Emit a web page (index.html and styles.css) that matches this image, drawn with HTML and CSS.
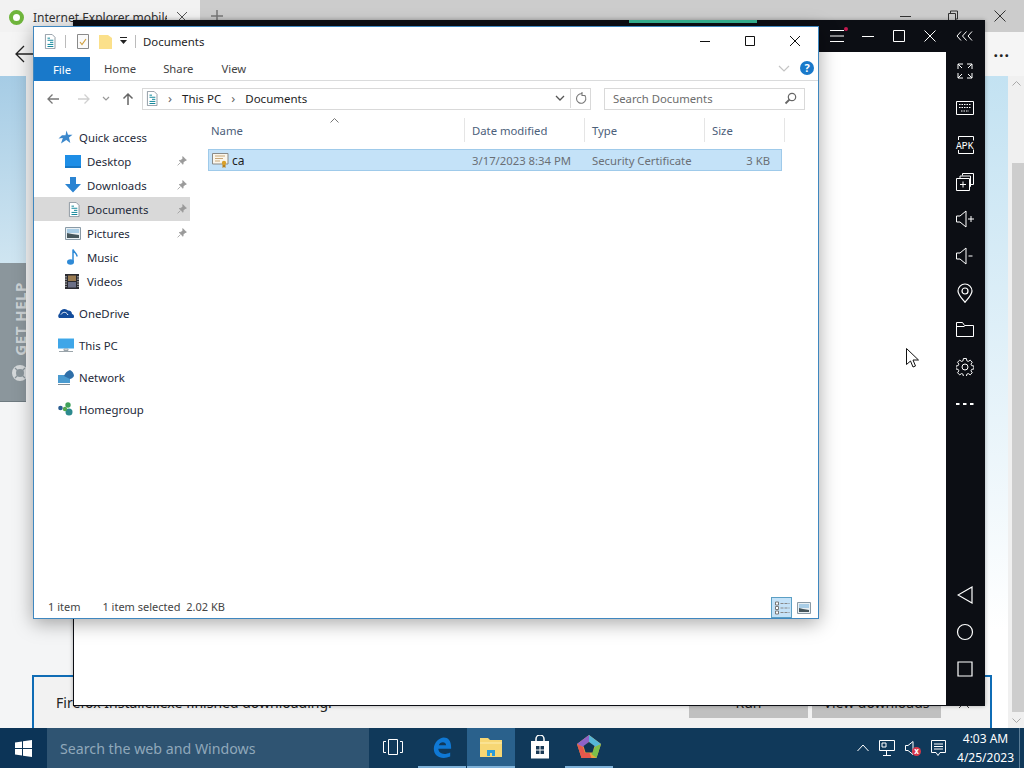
FILE: index.html
```html
<!DOCTYPE html>
<html lang="en">
<head>
    <meta charset="UTF-8">
    <title>Documents</title>
    <link rel="stylesheet" href="styles.css">
</head>
<body>
    <svg class="defs" width="0" height="0">
        <symbol id="i-doc" viewBox="0 0 14 18">
            <path d="M1.5 .5h8l3.5 3.5v13.500h-11.500z" fill="#fff" stroke="#7f8c96"/>
            <path d="M4 5h3M4 7.500h7M7 10h4M4 12.500h7M4 15h7" stroke="#15899c" stroke-width="1.200"/>
        </symbol>
        <symbol id="i-pin" viewBox="0 0 10 10">
            <path d="M5.800 .6l3.600 3.600-1.500.5-1.700 1.700-.2 1.900-3.800-3.800 1.900-.2 1.700-1.700zM3.300 6.700l-2.700 2.700" fill="#9a9a9a" stroke="#9a9a9a" stroke-width=".8"/>
        </symbol>
    </svg>

    <div class="desktop">
        <!-- navegador atras de tudo -->
        <div class="browser">
            <div class="tabstrip">
                <div class="tab">
                    <span class="favicon"></span>
                    <span class="tab-title">Internet Explorer mobile</span>
                    <svg class="tab-x" width="12" height="12" viewBox="0 0 12 12"><path d="M1 1l10 10M11 1L1 11" stroke="#555" fill="none"/></svg>
                </div>
                <svg class="tab-plus" width="14" height="14" viewBox="0 0 14 14"><path d="M7 1v12M1 7h12" stroke="#777" stroke-width="1.500" fill="none"/></svg>
                <div class="browser-controls">
                    <svg width="12" height="12" viewBox="0 0 12 12"><path d="M0 6.500h11" stroke="#333" fill="none"/></svg>
                    <svg width="12" height="12" viewBox="0 0 12 12"><path d="M1.500 3.500h7v8h-7zM3.500 3.500v-2.500h7v8h-2" stroke="#333" fill="none"/></svg>
                    <svg width="12" height="12" viewBox="0 0 12 12"><path d="M.5 .5l11 11M11.500 .5l-11 11" stroke="#333" fill="none"/></svg>
                </div>
            </div>
            <div class="browser-toolbar">
                <svg class="back" width="22" height="18" viewBox="0 0 22 18"><path d="M21 9H2M10 1L2 9l8 8" stroke="#222" stroke-width="1.300" fill="none"/></svg>
                <span class="more">...</span>
            </div>
            <div class="browser-page">
                <div class="page-left">
                    <div class="page-blue"></div>
                    <div class="gethelp">
                        <span class="gethelp-text">GET HELP</span>
                        <svg width="18" height="18" viewBox="0 0 18 18"><circle cx="9" cy="9" r="6" fill="none" stroke="#d5d9db" stroke-width="4"/><path d="M4 4l3 3M14 4l-3 3M4 14l3-3M14 14l-3-3" stroke="#8b969c" stroke-width="1.200"/></svg>
                    </div>
                </div>
                <div class="page-right"></div>
                <div class="scrollbar">
                    <svg width="9" height="5" viewBox="0 0 9 5"><path d="M.5 4.500l4-4 4 4" stroke="#a8a8a8" fill="none"/></svg>
                    <span class="thumb"></span>
                    <svg width="9" height="5" viewBox="0 0 9 5"><path d="M.5 .5l4 4 4-4" stroke="#a8a8a8" fill="none"/></svg>
                </div>
            </div>
        </div>

        <div class="download-bar">
            <span class="download-text">Firefox Installer.exe finished downloading.</span>
            <span class="dl-btn dl-run">Run</span>
            <span class="dl-btn dl-view">View downloads</span>
            <svg class="dl-x" width="12" height="12" viewBox="0 0 12 12"><path d="M1 1l10 10M11 1L1 11" stroke="#444" fill="none"/></svg>
        </div>

        <!-- emulador -->
        <div class="emulator">
            <div class="emu-top">
                <span class="emu-progress"></span>
                <div class="emu-controls">
                    <span class="emu-menu">
                        <svg width="14" height="14" viewBox="0 0 14 14"><path d="M0 1.500h14M0 7h14M0 12.500h14" stroke="#fff" fill="none"/></svg>
                        <i class="emu-dot"></i>
                    </span>
                    <svg width="14" height="14" viewBox="0 0 14 14"><path d="M1 7.500h12" stroke="#fff" fill="none"/></svg>
                    <svg width="14" height="14" viewBox="0 0 14 14"><path d="M1.500 1.500h11v11h-11z" stroke="#fff" fill="none"/></svg>
                    <svg width="14" height="14" viewBox="0 0 14 14"><path d="M1.500 1.500l11 11M12.500 1.500l-11 11" stroke="#fff" fill="none"/></svg>
                    <svg class="emu-collapse" width="18" height="10" viewBox="0 0 18 10"><path d="M5 .5L1 5l4 4.500M10.500 .5L6.500 5l4 4.500M16 .5L12 5l4 4.500" stroke="#fff" fill="none"/></svg>
                </div>
            </div>
            <div class="emu-body">
                <div class="emu-screen"></div>
                <div class="emu-side">
                    <span class="side-btn"><svg width="18" height="18" viewBox="0 0 18 18"><path d="M2 7V2h5M2 2l4 4M11 2h5v5M16 2l-4 4M2 11v5h5M2 16l4-4M16 11v5h-5M16 16l-4-4" stroke="#fff" fill="none"/></svg></span>
                    <span class="side-btn"><svg width="18" height="14" viewBox="0 0 18 14"><path d="M.5 .5h17v13H.5z" stroke="#fff" fill="none"/><path d="M3 3.500h12M3 6.500h12M5 10h8" stroke="#fff" stroke-dasharray="1.500 1" fill="none"/></svg></span>
                    <span class="side-btn"><svg class="apk-icon" width="18" height="18" viewBox="0 0 18 18"><path d="M2.500 4V.5h15v17h-15V14" stroke="#fff" fill="none"/><rect x="0" y="4.500" width="18" height="9" fill="#0c0e14"/><text class="apk" x="0" y="13" textLength="17.500" lengthAdjust="spacingAndGlyphs">APK</text></svg></span>
                    <span class="side-btn"><svg width="18" height="18" viewBox="0 0 18 18"><path d="M.5 5.500h13v12H.5zM4 5.500v-2.500h10.500v10.500h-1M6.500 2.500V.5h11v11h-3" stroke="#fff" fill="none"/><path d="M7 8.500v6M4 11.500h6" stroke="#fff" fill="none"/></svg></span>
                    <span class="side-btn"><svg width="18" height="18" viewBox="0 0 18 18"><path d="M.5 6h3.500l6-5v16l-6-5H.5z" stroke="#fff" fill="none"/><path d="M12 9h6M15 6v6" stroke="#fff" fill="none"/></svg></span>
                    <span class="side-btn"><svg width="18" height="18" viewBox="0 0 18 18"><path d="M.5 6h3.500l6-5v16l-6-5H.5z" stroke="#fff" fill="none"/><path d="M12.500 9h4" stroke="#fff" fill="none"/></svg></span>
                    <span class="side-btn"><svg width="16" height="20" viewBox="0 0 16 20"><path d="M8 19.300C4 14.500 1 11.500 1 8a7 7 0 0 1 14 0c0 3.500-3 6.500-7 11.300z" stroke="#fff" stroke-width="1.200" fill="none"/><circle cx="8" cy="8" r="3" stroke="#fff" stroke-width="1.200" fill="none"/></svg></span>
                    <span class="side-btn"><svg width="18" height="15" viewBox="0 0 18 15"><path d="M.5 14.500V.5h6l2 3h9v11zM.5 4.500h8" stroke="#fff" fill="none"/></svg></span>
                    <span class="side-btn"><svg width="18" height="18" viewBox="0 0 18 18"><path d="M7.500 .7h3l.4 2.300 1.500.7 2-1.300 2.100 2.100-1.300 2 .7 1.500 2.300.4v3l-2.300.4-.7 1.500 1.300 2-2.100 2.100-2-1.300-1.500.7-.4 2.300h-3l-.4-2.300-1.500-.7-2 1.300-2.100-2.100 1.300-2-.7-1.500-2.300-.4v-3l2.300-.4.7-1.500-1.300-2 2.100-2.100 2 1.300 1.500-.7z" transform="translate(.1 -.2) scale(.98)" stroke="#fff" fill="none"/><circle cx="9" cy="9" r="3" stroke="#fff" fill="none"/></svg></span>
                    <span class="side-btn"><svg width="18" height="4" viewBox="0 0 18 4"><path d="M0 2h3.500M7 2h3.500M14 2h3.500" stroke="#fff" stroke-width="2" fill="none"/></svg></span>
                    <div class="side-nav">
                        <span class="side-btn"><svg width="16" height="18" viewBox="0 0 16 18"><path d="M15 1v16L1 9z" stroke="#fff" stroke-width="1.200" fill="none"/></svg></span>
                        <span class="side-btn"><svg width="18" height="18" viewBox="0 0 18 18"><circle cx="9" cy="9" r="7.500" stroke="#fff" stroke-width="1.200" fill="none"/></svg></span>
                        <span class="side-btn"><svg width="16" height="16" viewBox="0 0 16 16"><path d="M1 1h14v14H1z" stroke="#fff" stroke-width="1.200" fill="none"/></svg></span>
                    </div>
                </div>
            </div>
        </div>

        <!-- explorador de arquivos -->
        <div class="explorer">
            <div class="titlebar">
                <svg class="qa-doc" width="12" height="15"><use href="#i-doc"/></svg>
                <span class="qa-sep"></span>
                <svg width="12" height="15" viewBox="0 0 12 15"><path d="M.5 .5h11v14H.5z" fill="#fafafa" stroke="#8a8a8a"/><path d="M3 8l2 2.500L9 5" stroke="#d0a040" stroke-width="1.200" fill="none"/></svg>
                <svg class="qa-folder" width="13" height="15" viewBox="0 0 13 15"><path d="M0 1h9l4 3v11H0z" fill="#fbe08a"/></svg>
                <svg class="qa-drop" width="8" height="8" viewBox="0 0 8 8"><path d="M0 0h7v1H0zM0 3h7L3.500 7z" fill="#222"/></svg>
                <span class="qa-sep last"></span>
                <span class="title-text">Documents</span>
                <div class="win-controls">
                    <svg width="12" height="12" viewBox="0 0 12 12"><path d="M1 6.500h10" stroke="#111" fill="none"/></svg>
                    <svg width="12" height="12" viewBox="0 0 12 12"><path d="M1.500 1.500h9v9h-9z" stroke="#111" fill="none"/></svg>
                    <svg width="12" height="12" viewBox="0 0 12 12"><path d="M1 1l10 10M11 1L1 11" stroke="#111" fill="none"/></svg>
                </div>
            </div>
            <div class="ribbon">
                <span class="rtab rtab-file">File</span>
                <span class="rtab rtab-home">Home</span>
                <span class="rtab rtab-share">Share</span>
                <span class="rtab rtab-view">View</span>
                <svg class="ribbon-chev" width="12" height="7" viewBox="0 0 12 7"><path d="M1 1l5 5 5-5" stroke="#c4c4c4" stroke-width="1.200" fill="none"/></svg>
                <span class="help">?</span>
            </div>
            <div class="navbar">
                <svg class="nav-back" width="14" height="12" viewBox="0 0 14 12"><path d="M13 6H2M6.500 1.500L2 6l4.500 4.500" stroke="#777" stroke-width="1.300" fill="none"/></svg>
                <svg class="nav-fwd" width="14" height="12" viewBox="0 0 14 12"><path d="M1 6h11M7.500 1.500L12 6l-4.500 4.500" stroke="#d0d0d0" stroke-width="1.300" fill="none"/></svg>
                <svg class="nav-drop" width="8" height="6" viewBox="0 0 8 6"><path d="M1 1l3 3 3-3" stroke="#999" stroke-width="1.200" fill="none"/></svg>
                <svg class="nav-up" width="12" height="14" viewBox="0 0 12 14"><path d="M6 13V2M1.500 6.500L6 2l4.500 4.500" stroke="#666" stroke-width="1.500" fill="none"/></svg>
                <div class="addressbar">
                    <svg class="addr-doc" width="12" height="15"><use href="#i-doc"/></svg>
                    <span class="crumb-sep">&rsaquo;</span>
                    <span>This PC</span>
                    <span class="crumb-sep">&rsaquo;</span>
                    <span>Documents</span>
                    <svg class="addr-drop" width="10" height="7" viewBox="0 0 10 7"><path d="M1 1l4 4 4-4" stroke="#555" stroke-width="1.300" fill="none"/></svg>
                    <span class="addr-refresh">
                        <svg width="12" height="13" viewBox="0 0 12 13"><path d="M9.800 3.500a4.700 4.700 0 1 1-2.300-1.500M7 0v3.500h3.500" stroke="#777" stroke-width="1.100" fill="none"/></svg>
                    </span>
                </div>
                <div class="searchbox">
                    <span>Search Documents</span>
                    <svg width="13" height="13" viewBox="0 0 13 13"><circle cx="8" cy="5" r="3.700" stroke="#666" stroke-width="1.200" fill="none"/><path d="M5.500 7.500L1.500 11.500" stroke="#666" stroke-width="1.800"/></svg>
                </div>
            </div>
            <div class="main">
                <ul class="sidebar">
                    <li class="side-item top">
                        <svg width="15" height="14" viewBox="0 0 15 14"><path d="M8.500 .5l1.500 4.200h4.500L11 7.500l1.300 5.500-4-3L3 13.500l1.800-5.500L.5 8.500l3.500-3.300h3.500z" fill="#3c88cc"/></svg>
                        <span>Quick access</span>
                    </li>
                    <li class="side-item sub">
                        <svg width="16" height="13" viewBox="0 0 16 13"><rect width="16" height="13" fill="#1e8ee6"/><path d="M0 12h16" stroke="#0f62a8"/></svg>
                        <span>Desktop</span><svg class="pin" width="10" height="10"><use href="#i-pin"/></svg>
                    </li>
                    <li class="side-item sub">
                        <svg width="16" height="16" viewBox="0 0 16 16"><path d="M5 0h6v7h5l-8 8.500L0 7h5z" fill="#2b84d2"/></svg>
                        <span>Downloads</span><svg class="pin" width="10" height="10"><use href="#i-pin"/></svg>
                    </li>
                    <li class="side-item sub current">
                        <svg class="doc" width="12" height="15"><use href="#i-doc"/></svg>
                        <span>Documents</span><svg class="pin" width="10" height="10"><use href="#i-pin"/></svg>
                    </li>
                    <li class="side-item sub">
                        <svg width="16" height="13" viewBox="0 0 16 13"><path d="M.5 .5h15v12H.5z" fill="#e8eff3" stroke="#8a9aa6"/><path d="M2 2h12v4H2z" fill="#a9cde6"/><path d="M2 6l5 1 7 1v3H2z" fill="#46565c"/></svg>
                        <span>Pictures</span><svg class="pin" width="10" height="10"><use href="#i-pin"/></svg>
                    </li>
                    <li class="side-item sub">
                        <svg width="16" height="16" viewBox="0 0 16 16"><ellipse cx="5.500" cy="13" rx="3.500" ry="2.700" fill="#2f8ad6"/><path d="M8 13V.5c1 3 4 3.500 4 7" stroke="#2f8ad6" stroke-width="1.500" fill="none"/></svg>
                        <span>Music</span>
                    </li>
                    <li class="side-item sub">
                        <svg width="14" height="15" viewBox="0 0 14 15"><rect width="14" height="15" fill="#2b2b30"/><path d="M3 1.500h8v5.500H3z" fill="#9a7b50"/><path d="M3 8h8v5.500H3z" fill="#6b6f86"/><path d="M1 2v11M13 2v11" stroke="#ddd" stroke-dasharray="1.500 1"/></svg>
                        <span>Videos</span>
                    </li>
                    <li class="side-item top gap">
                        <svg width="16" height="10" viewBox="0 0 16 10"><path d="M1 10a3 3 0 0 1 .5-4.500A5 5 0 0 1 10 2.500 3.500 3.500 0 0 1 14 6a2.500 2.500 0 0 1 1.500 4z" fill="#144d9c"/><path d="M3 6.500c2-3 5-3 7 .5" stroke="#fff" fill="none"/></svg>
                        <span>OneDrive</span>
                    </li>
                    <li class="side-item top gap">
                        <svg width="16" height="15" viewBox="0 0 16 15"><rect width="16" height="10.500" fill="#3fa6e8"/><path d="M0 .5h16" stroke="#9fd6f5"/><path d="M6 11h4v1.500H6zM1 13.500h14" stroke="#9aa4aa" fill="none"/></svg>
                        <span>This PC</span>
                    </li>
                    <li class="side-item top gap">
                        <svg width="16" height="15" viewBox="0 0 16 15"><rect x="0" y="5" width="12" height="8" fill="#4b9bd0"/><path d="M0 14.500h12" stroke="#7f8c96"/><path d="M6 6c1-3 3-5 6-6 2 1 4 3 4 6-1 2-3 3-4 3z" fill="#2f6fa8"/></svg>
                        <span>Network</span>
                    </li>
                    <li class="side-item top gap">
                        <svg width="16" height="14" viewBox="0 0 16 14"><circle cx="2.500" cy="6" r="2.300" fill="#2a5d92"/><circle cx="10" cy="3" r="2.700" fill="#3fa05a"/><circle cx="11" cy="10" r="3.500" fill="#2c8a8e"/><circle cx="7" cy="7" r="2.200" fill="#54a84e"/></svg>
                        <span>Homegroup</span>
                    </li>
                </ul>
                <div class="filelist">
                    <div class="col-heads">
                        <svg class="sort" width="9" height="5" viewBox="0 0 9 5"><path d="M.5 4.500l4-4 4 4" stroke="#777" fill="none"/></svg>
                        <span class="col col-name">Name</span>
                        <span class="col col-date">Date modified</span>
                        <span class="col col-type">Type</span>
                        <span class="col col-size">Size</span>
                    </div>
                    <div class="file-row">
                        <span class="cell col-name file-name">
                            <svg width="17" height="16" viewBox="0 0 17 16"><path d="M.5 1.500h15.500v10.500H.5z" fill="#faf6ec" stroke="#8a8a86"/><path d="M3 4h10M3 6.500h8M3 9h5" stroke="#c9a878"/><circle cx="12" cy="11" r="2.200" fill="#d8a028"/><path d="M10.500 13v3l1.500-1 1.500 1v-3" fill="#b8801a"/></svg>
                            <span>ca</span>
                        </span>
                        <span class="cell col-date">3/17/2023 8:34 PM</span>
                        <span class="cell col-type">Security Certificate</span>
                        <span class="cell col-size">3 KB</span>
                    </div>
                </div>
            </div>
            <div class="statusbar">
                <span class="st-count">1 item</span>
                <span>1 item selected&nbsp; 2.02 KB</span>
                <div class="viewbtns">
                    <span class="viewbtn active">
                        <svg width="16" height="14" viewBox="0 0 16 14"><path d="M1.500 1h3v3h-3zM1.500 5.500h3v3h-3zM1.500 10h3v3h-3z" fill="#fff" stroke="#777"/><path d="M6.500 2.500h9M6.500 7h9M6.500 11.500h9" stroke="#888" stroke-dasharray="3 1"/></svg>
                    </span>
                    <span class="viewbtn">
                        <svg width="14" height="12" viewBox="0 0 14 12"><path d="M.5 .5h13v11H.5z" fill="#e8eff3" stroke="#8a9aa6"/><path d="M2 2h10v4H2z" fill="#a9cde6"/><path d="M2 6l4 1 6 1v2H2z" fill="#46565c"/></svg>
                    </span>
                </div>
            </div>
        </div>

        <svg class="cursor" width="13" height="20" viewBox="0 0 13 20"><path d="M.5 .5v16l4-3.500 2.500 6 2.500-1-2.500-6h5.500z" fill="#fff" stroke="#111"/></svg>

        <!-- barra de tarefas -->
        <div class="taskbar">
            <span class="start">
                <svg width="17" height="17" viewBox="0 0 17 17"><path d="M0 2.400l7-1v6.600H0zM8 1.300L17 0v8H8zM0 9h7v6.600l-7-1zM8 9h9v8l-9-1.300z" fill="#fff"/></svg>
            </span>
            <span class="task-search">Search the web and Windows</span>
            <span class="task-btn task-view">
                <svg width="20" height="16" viewBox="0 0 20 16"><path d="M5.500 .5h9v15h-9zM3 2.500H.5v11H3M17 2.500h2.500v11H17" stroke="#fff" fill="none"/></svg>
            </span>
            <span class="task-btn running edge">
                <svg width="20" height="23" viewBox="0 0 22 23"><path d="M21 13H7c0 5 6 7.500 13 4v4.500c-9 3.500-18 .5-18-8.500C2 6 8 .5 13 .5c5 0 8.500 4 8 12.500zM7.500 9h8c0-4.500-7-4.500-8 0z" fill="#0f78d4"/></svg>
            </span>
            <span class="task-btn running active">
                <svg width="22" height="20" viewBox="0 0 22 20"><path d="M0 1h8l2 2h12v17H0z" fill="#f7d774"/><path d="M0 6h22" stroke="#fdeeb0"/><path d="M7 19v-6h8v6h-3v-3h-2v3z" fill="#2a9bd8"/></svg>
            </span>
            <span class="task-btn">
                <svg width="20" height="24" viewBox="0 0 20 24"><path d="M1 6h18v17.500H1z" fill="#fff"/><path d="M6 8V4a4 4 0 0 1 8 0v4" stroke="#fff" stroke-width="1.500" fill="none"/><path d="M6 11h3.500v3.500H6zM10.500 11H14v3.500h-3.500zM6 15.500h3.500V19H6zM10.500 15.500H14V19h-3.500z" fill="#1a3a56"/></svg>
            </span>
            <span class="task-btn running">
                <svg width="24" height="24" viewBox="0 0 24 24"><path d="M12 0l12 9-4.500 14h-15L0 9z" fill="#e8a33c"/><path d="M12 0l12 9-6 3-6-5z" fill="#56b7d8"/><path d="M12 0L0 9l6 3 6-5z" fill="#8d63c9"/><path d="M24 9l-4.500 14-5-4 3.500-7z" fill="#7cc04b"/><path d="M0 9l4.500 14h10l-2-5H8l-2-6z" fill="#e4574c"/><path d="M12 7l5.500 4-2 6.500h-7L6.500 11z" fill="#0d3556"/></svg>
            </span>
            <div class="tray">
                <svg width="12" height="8" viewBox="0 0 12 8"><path d="M.5 7L6 1l5.500 6" stroke="#fff" fill="none"/></svg>
                <svg width="16" height="16" viewBox="0 0 16 16"><path d="M.5 .5h15v10H.5zM7.500 10.500v4.500M4 15.500h8M3 3h4v4H3z" stroke="#fff" fill="none"/></svg>
                <span class="tray-vol">
                    <svg width="9" height="14" viewBox="0 0 9 14"><path d="M.5 4.500h2.500L8 .5v13l-5-4H.5z" stroke="#fff" fill="none"/></svg>
                    <i class="tray-mute">x</i>
                </span>
                <svg width="15" height="17" viewBox="0 0 15 17"><path d="M.5 .5h14v12H9l-2 3-2-3H.5zM3 4h9M3 6.500h9M3 9h9" stroke="#fff" fill="none"/></svg>
                <div class="clock"><span>4:03 AM</span><span>4/25/2023</span></div>
            </div>
            <span class="showdesk"></span>
        </div>
    </div>
</body>
</html>
```

FILE: styles.css
```css
/* Geral */
* {
    margin: 0;
    padding: 0;
    box-sizing: border-box;
}

body {
    background-color: #fff;
    font-family: "Noto Sans", sans-serif;
    overflow: hidden;
}

svg {
    display: block;
    flex: none;
}

.defs {
    position: absolute;
}

.desktop {
    position: relative;
    width: 1024px;
    height: 768px;
    overflow: hidden;
    display: flex;
    flex-direction: column;
}

/* Navegador */
.browser {
    flex: 1;
    display: flex;
    flex-direction: column;
    min-height: 0;
}

.tabstrip {
    height: 32px;
    background-color: #ccc;
    display: flex;
    align-items: center;
}

.tab {
    width: 200px;
    height: 32px;
    background-color: #f2f2f2;
    display: flex;
    align-items: center;
    padding: 3px 12px 0 9px;
}

.favicon {
    width: 15px;
    height: 15px;
    border-radius: 50%;
    border: 4px solid #6fb53c;
    background-color: #fff;
    margin-top: -1px;
    flex: none;
}

.tab-title {
    font-size: 12px;
    color: #333;
    margin-left: 9px;
    width: 134px;
    overflow: hidden;
    white-space: nowrap;
}

.tab-x {
    margin-left: 9px;
    margin-top: -2px;
}

.tab-plus {
    margin-left: 10px;
    margin-top: -1px;
}

.browser-controls {
    margin-left: auto;
    display: flex;
    align-items: center;
    gap: 35px;
    padding-right: 18px;
}

.browser-toolbar {
    height: 44px;
    background-color: #f5f5f5;
    display: flex;
    align-items: center;
    justify-content: space-between;
    padding: 0 14px;
}

.more {
    font-size: 16px;
    font-weight: 700;
    letter-spacing: 1px;
    color: #222;
    margin-top: -6px;
}

.browser-page {
    flex: 1;
    display: flex;
    min-height: 0;
    background-color: #f4f5f6;
}

.page-left {
    width: 26px;
    display: flex;
    flex-direction: column;
}

.page-blue {
    height: 187px;
    background: linear-gradient(#a6cce5, #cfe5f1);
}

.gethelp {
    height: 139px;
    background-color: #8b969c;
    border-bottom: 1px solid #6e7a80;
    display: flex;
    flex-direction: column;
    align-items: center;
    padding: 19px 0 0 14px;
    overflow: hidden;
}

.gethelp-text {
    writing-mode: vertical-rl;
    transform: rotate(180deg);
    font-family: "Open Sans", sans-serif;
    font-size: 15px;
    font-weight: 700;
    letter-spacing: .5px;
    color: #ccd2d5;
    margin-bottom: 8px;
    white-space: nowrap;
}

.page-right {
    width: 23px;
    margin-left: auto;
    background: linear-gradient(#c3e2f2, #fff 85%);
}

.scrollbar {
    width: 16px;
    background-color: #f0f0f0;
    display: flex;
    flex-direction: column;
    align-items: center;
    padding: 5px 0 5px 0;
}

.thumb {
    display: block;
    flex: 1;
    width: 12px;
    margin: 77px 0 6px 4px;
    background-color: #cdcdcd;
}

/* Barra de download */
.download-bar {
    position: absolute;
    left: 32px;
    top: 675px;
    width: 960px;
    height: 53px;
    background-color: #f2f2f2;
    border: 2px solid #0f6cb5;
    border-bottom: none;
    display: flex;
    align-items: center;
    padding: 0 20px 0 22px;
}

.download-text {
    font-size: 14px;
    color: #222;
    margin-right: auto;
}

.dl-btn {
    height: 30px;
    align-self: flex-start;
    margin-top: 11px;
    padding-bottom: 2px;
    background-color: #c0c0c0;
    font-size: 14px;
    color: #222;
    display: flex;
    align-items: center;
    justify-content: center;
}

.dl-run {
    width: 119px;
    margin-right: 4px;
}

.dl-view {
    width: 129px;
    margin-right: 17px;
}

/* Emulador */
.emulator {
    position: absolute;
    left: 73px;
    top: 20px;
    width: 912px;
    height: 686px;
    background-color: #0c0e14;
    box-shadow: 0 0 4px rgba(0,0,0,0.3);
    display: flex;
    flex-direction: column;
}

.emu-top {
    position: relative;
    height: 32px;
    flex: none;
}

.emu-progress {
    position: absolute;
    left: 556px;
    top: 0;
    width: 128px;
    height: 3px;
    background-color: #37b795;
}

.emu-controls {
    position: absolute;
    right: 11px;
    top: 9px;
    display: flex;
    align-items: center;
}

.emu-controls svg {
    margin-left: 17px;
}

.emu-menu {
    position: relative;
    display: block;
}

.emu-dot {
    position: absolute;
    right: -4px;
    top: -2px;
    width: 4px;
    height: 4px;
    border-radius: 50%;
    background-color: #c2184f;
}

.emu-controls svg.emu-collapse {
    margin-left: 19px;
}

.emu-body {
    flex: 1;
    display: flex;
    min-height: 0;
}

.emu-screen {
    flex: 1;
    background-color: #fff;
    margin: 0 0 1px 1px;
}

.emu-side {
    width: 39px;
    display: flex;
    flex-direction: column;
    padding: 0 1px 19px 0;
}

.side-btn {
    height: 37px;
    display: flex;
    align-items: center;
    justify-content: center;
    flex: none;
}

.side-nav {
    margin-top: auto;
}

.apk-icon {
    overflow: visible;
}

.apk {
    font-family: "Liberation Mono", monospace;
    font-size: 11px;
    fill: #fff;
}

/* Explorador */
.explorer {
    position: absolute;
    left: 33px;
    top: 26px;
    width: 786px;
    height: 593px;
    background-color: #fff;
    border: 1px solid #3f87bf;
    box-shadow: 0 4px 18px rgba(0,0,0,0.35);
    display: flex;
    flex-direction: column;
    font-size: 11.300px;
    color: #1e1e1e;
}

.titlebar {
    height: 30px;
    display: flex;
    align-items: center;
    padding: 0 0 2px 10px;
    flex: none;
}

.qa-sep {
    width: 1px;
    height: 13px;
    background-color: #bbb;
    margin: 0 11px 0 9px;
}

.qa-sep.last {
    margin: 0 7px 0 7px;
}

.qa-folder {
    margin-left: 10px;
}

.qa-drop {
    margin-left: 8px;
}

.title-text {
    font-size: 11.400px;
}

.win-controls {
    margin-left: auto;
    display: flex;
    gap: 33px;
    padding-right: 17px;
}

.ribbon {
    height: 24px;
    border-bottom: 1px solid #dadbdc;
    display: flex;
    align-items: stretch;
    flex: none;
    position: relative;
}

.rtab {
    display: flex;
    align-items: center;
    color: #444;
}

.rtab-file {
    width: 56px;
    height: 24px;
    background-color: #1979ca;
    color: #fff;
    justify-content: center;
}

.rtab-home {
    margin-left: 14px;
}

.rtab-share {
    margin-left: 27px;
}

.rtab-view {
    margin-left: 28px;
}

.ribbon-chev {
    margin: 8px 0 0 auto;
}

.help {
    width: 14px;
    height: 14px;
    border-radius: 50%;
    background-color: #1979ca;
    color: #fff;
    font-size: 11px;
    font-weight: 700;
    line-height: 14px;
    text-align: center;
    margin: 4px 4px 0 10px;
}

.navbar {
    height: 36px;
    display: flex;
    align-items: center;
    padding: 0 0 1px 12px;
    flex: none;
}

.nav-fwd {
    margin-left: 17px;
}

.nav-drop {
    margin-left: 11px;
}

.nav-up {
    margin-left: 12px;
}

.addressbar {
    width: 449px;
    height: 22px;
    margin-left: 8px;
    border: 1px solid #d9d9d9;
    display: flex;
    align-items: center;
    padding: 0 0 1px 3px;
    gap: 10px;
    font-size: 11.500px;
}

.crumb-sep {
    color: #666;
    font-size: 13px;
    line-height: 1;
}

.addr-drop {
    margin-left: auto;
}

.addr-refresh {
    width: 20px;
    height: 20px;
    border-left: 1px solid #d9d9d9;
    display: flex;
    align-items: center;
    justify-content: center;
    margin-left: -5px;
}

.searchbox {
    width: 201px;
    height: 22px;
    margin-left: 13px;
    border: 1px solid #d9d9d9;
    display: flex;
    align-items: center;
    justify-content: space-between;
    padding: 0 7px 1px 8px;
    color: #6d6d6d;
}

.main {
    flex: 1;
    display: flex;
    min-height: 0;
}

/* Painel lateral */
.sidebar {
    width: 156px;
    list-style: none;
    padding-top: 8px;
    flex: none;
}

.side-item {
    height: 24px;
    display: flex;
    align-items: center;
    position: relative;
    font-size: 11.400px;
    color: #1e2a3a;
}

.side-item.top {
    padding-left: 24px;
}

.side-item.top span {
    position: absolute;
    left: 45px;
}

.side-item.gap {
    margin-top: 8px;
}

.side-item.sub {
    padding-left: 31px;
}

.side-item.sub span {
    position: absolute;
    left: 53px;
}

.side-item.sub .doc {
    margin-left: 3px;
}

.side-item.current {
    background-color: #d9d9d9;
}

.pin {
    position: absolute;
    left: 143px;
}

/* Lista de arquivos */
.filelist {
    flex: 1;
    padding: 0 0 0 18px;
}

.col-heads {
    position: relative;
    height: 28px;
    display: flex;
    align-items: center;
    padding-bottom: 2px;
    color: #4c607a;
}

.sort {
    position: absolute;
    left: 122px;
    top: 1px;
}

.col {
    height: 24px;
    border-right: 1px solid #e5e5e5;
    display: flex;
    align-items: center;
    padding-left: 7px;
}

.col-name {
    width: 257px;
    padding-left: 3px;
}

.col-date {
    width: 120px;
}

.col-type {
    width: 120px;
}

.col-size {
    width: 80px;
}

.file-row {
    width: 574px;
    height: 22px;
    margin-top: 4px;
    background-color: #c4e2f8;
    border: 1px solid #9fcaea;
    display: flex;
    align-items: center;
    color: #6a6f75;
}

.cell {
    display: flex;
    align-items: center;
}

.cell.col-date {
    padding-left: 7px;
}

.cell.col-type {
    padding-left: 7px;
}

.cell.col-size {
    width: 69px;
    justify-content: flex-end;
    padding-right: 4px;
}

.file-name {
    color: #1e1e1e;
    gap: 3px;
    padding-left: 3px;
    font-size: 12px;
    width: 256px;
}

/* Barra de status */
.statusbar {
    height: 22px;
    display: flex;
    align-items: center;
    padding: 0 0 2px 14px;
    color: #444;
    font-size: 11px;
    position: relative;
    flex: none;
}

.st-count {
    margin-right: 22px;
}

.viewbtns {
    margin-left: auto;
    display: flex;
    align-items: center;
    gap: 1px;
    padding-right: 4px;
    align-self: flex-end;
    margin-bottom: -2px;
}

.viewbtn {
    width: 21px;
    height: 21px;
    display: flex;
    align-items: center;
    justify-content: center;
}

.viewbtn.active {
    background-color: #c4e2f8;
    border: 1px solid #5b9fc4;
}

.cursor {
    position: absolute;
    left: 906px;
    top: 348px;
}

/* Barra de tarefas */
.taskbar {
    height: 40px;
    flex: none;
    background-color: #10395a;
    display: flex;
    align-items: stretch;
    position: relative;
    color: #fff;
}

.start {
    width: 47px;
    background-color: #0c3457;
    display: flex;
    align-items: center;
    justify-content: center;
}

.task-search {
    width: 322px;
    background-color: #2f5472;
    color: #90a8ba;
    font-size: 14.200px;
    display: flex;
    align-items: center;
    padding-left: 13px;
}

.task-btn {
    width: 48px;
    display: flex;
    align-items: center;
    justify-content: center;
    border-bottom: 2px solid transparent;
    margin-left: 1px;
}

.task-btn.task-view {
    width: 46px;
    margin-right: 1px;
}

.task-btn.running {
    border-bottom-color: #7fb2d9;
}

.task-btn.active {
    background-color: #2a618c;
}

.tray {
    margin-left: auto;
    display: flex;
    align-items: center;
    gap: 10px;
    padding-right: 10px;
}

.tray-vol {
    position: relative;
    width: 16px;
}

.tray-mute {
    position: absolute;
    left: 7px;
    top: 6px;
    width: 9px;
    height: 9px;
    border-radius: 50%;
    background-color: #d8384a;
    color: #fff;
    font-size: 8px;
    font-style: normal;
    font-weight: 700;
    line-height: 8px;
    text-align: center;
}

.clock {
    display: flex;
    flex-direction: column;
    align-items: center;
    gap: 2px;
    font-size: 12px;
    line-height: 17px;
    margin-left: 1px;
}

.showdesk {
    position: absolute;
    right: 4px;
    top: 0;
    bottom: 0;
    width: 1px;
    background-color: #5a7c96;
}
```
